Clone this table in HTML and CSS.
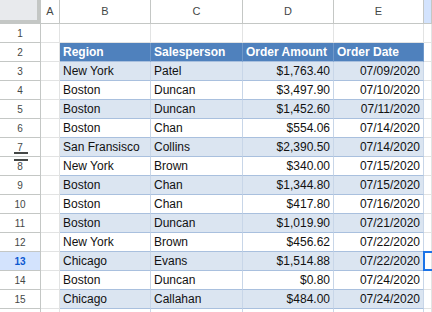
FILE: index.html
```html
<!DOCTYPE html>
<html>
<head>
<meta charset="utf-8">
<link rel="stylesheet" href="styles.css">
</head>
<body>
<div class="sheet">
  <div class="corner"></div>
  <div class="ch">A</div><div class="ch">B</div><div class="ch">C</div><div class="ch">D</div><div class="ch">E</div><div class="ch sel"></div>

  <div class="rh">1</div><div class="c"></div><div class="c"></div><div class="c"></div><div class="c"></div><div class="c"></div><div class="c"></div>

  <div class="rh">2</div><div class="c"></div><div class="c th">Region</div><div class="c th">Salesperson</div><div class="c th">Order Amount</div><div class="c th">Order Date</div><div class="c"></div>

  <div class="rh">3</div><div class="c"></div><div class="c t b">New York</div><div class="c t b">Patel</div><div class="c t b r">$1,763.40</div><div class="c t b r">07/09/2020</div><div class="c"></div>
  <div class="rh">4</div><div class="c"></div><div class="c t">Boston</div><div class="c t">Duncan</div><div class="c t r">$3,497.90</div><div class="c t r">07/10/2020</div><div class="c"></div>
  <div class="rh">5</div><div class="c"></div><div class="c t b">Boston</div><div class="c t b">Duncan</div><div class="c t b r">$1,452.60</div><div class="c t b r">07/11/2020</div><div class="c"></div>
  <div class="rh">6</div><div class="c"></div><div class="c t">Boston</div><div class="c t">Chan</div><div class="c t r">$554.06</div><div class="c t r">07/14/2020</div><div class="c"></div>
  <div class="rh mark-below">7</div><div class="c"></div><div class="c t b">San Fransisco</div><div class="c t b">Collins</div><div class="c t b r">$2,390.50</div><div class="c t b r">07/14/2020</div><div class="c"></div>
  <div class="rh mark-above">8</div><div class="c"></div><div class="c t">New York</div><div class="c t">Brown</div><div class="c t r">$340.00</div><div class="c t r">07/15/2020</div><div class="c"></div>
  <div class="rh">9</div><div class="c"></div><div class="c t b">Boston</div><div class="c t b">Chan</div><div class="c t b r">$1,344.80</div><div class="c t b r">07/15/2020</div><div class="c"></div>
  <div class="rh">10</div><div class="c"></div><div class="c t">Boston</div><div class="c t">Chan</div><div class="c t r">$417.80</div><div class="c t r">07/16/2020</div><div class="c"></div>
  <div class="rh">11</div><div class="c"></div><div class="c t b">Boston</div><div class="c t b">Duncan</div><div class="c t b r">$1,019.90</div><div class="c t b r">07/21/2020</div><div class="c"></div>
  <div class="rh">12</div><div class="c"></div><div class="c t">New York</div><div class="c t">Brown</div><div class="c t r">$456.62</div><div class="c t r">07/22/2020</div><div class="c"></div>
  <div class="rh sel">13</div><div class="c"></div><div class="c t b">Chicago</div><div class="c t b">Evans</div><div class="c t b r">$1,514.88</div><div class="c t b r">07/22/2020</div><div class="c active"></div>
  <div class="rh">14</div><div class="c"></div><div class="c t">Boston</div><div class="c t">Duncan</div><div class="c t r">$0.80</div><div class="c t r">07/24/2020</div><div class="c"></div>
  <div class="rh">15</div><div class="c"></div><div class="c t b">Chicago</div><div class="c t b">Callahan</div><div class="c t b r">$484.00</div><div class="c t b r">07/24/2020</div><div class="c"></div>
  <div class="rh"></div><div class="c"></div><div class="c t"></div><div class="c t"></div><div class="c t"></div><div class="c t"></div><div class="c"></div>
</div>
</body>
</html>
```

FILE: styles.css
```css
html, body {
  margin: 0;
  padding: 0;
  background: #ffffff;
  overflow: hidden;
}

.sheet {
  display: grid;
  grid-template-columns: 41px 19px 91px 92px 91px 90px 8px;
  grid-template-rows: 24px repeat(15, 19px) 4px;
  font-family: "Liberation Sans", Arial, sans-serif;
  width: 432px;
  height: 312px;
  overflow: hidden;
}

.sheet > div {
  box-sizing: border-box;
  border-right: 1px solid #e2e3e3;
  border-bottom: 1px solid #e2e3e3;
  display: flex;
  align-items: center;
  overflow: hidden;
  white-space: nowrap;
}

.corner {
  background: #e8eaed;
  border-right: 4px solid #c4c7c5 !important;
  border-bottom: 4px solid #c4c7c5 !important;
}

.ch {
  justify-content: center;
  font-size: 11px;
  color: #444746;
  background: #ffffff;
  border-right-color: #c4c7c5 !important;
  border-bottom-color: #c4c7c5 !important;
  padding-bottom: 1px;
}

.rh {
  justify-content: center;
  font-size: 10px;
  color: #444746;
  background: #ffffff;
  border-right-color: #c4c7c5 !important;
  border-bottom-color: #c4c7c5 !important;
  position: relative;
}

.sel {
  background: #d3e3fd !important;
}

.rh.sel {
  font-weight: bold;
  color: #0b57d0;
}

.c {
  font-size: 12px;
  color: #111111;
  padding: 0 3px;
}

.th {
  background: #4f81bd;
  color: #ffffff;
  font-weight: bold;
  border-right-color: #6f98c9 !important;
  border-bottom-color: #a9c0de !important;
}

.t {
  border-right-color: #c8d6e8 !important;
  border-bottom-color: #a9c0de !important;
}

.b {
  background: #dbe5f1;
}

.r {
  justify-content: flex-end;
}

.mark-below::after,
.mark-above::before {
  content: "";
  position: absolute;
  left: 14px;
  width: 14px;
  height: 2px;
  background: #444746;
}

.mark-below::after {
  bottom: 2px;
}

.mark-above::before {
  top: 2px;
}

.active {
  position: relative;
  overflow: visible !important;
}

.active::after {
  content: "";
  position: absolute;
  left: -1px;
  top: -1px;
  width: 10px;
  height: 20px;
  box-sizing: border-box;
  border: 2px solid #1a73e8;
  border-right: none;
}
```
